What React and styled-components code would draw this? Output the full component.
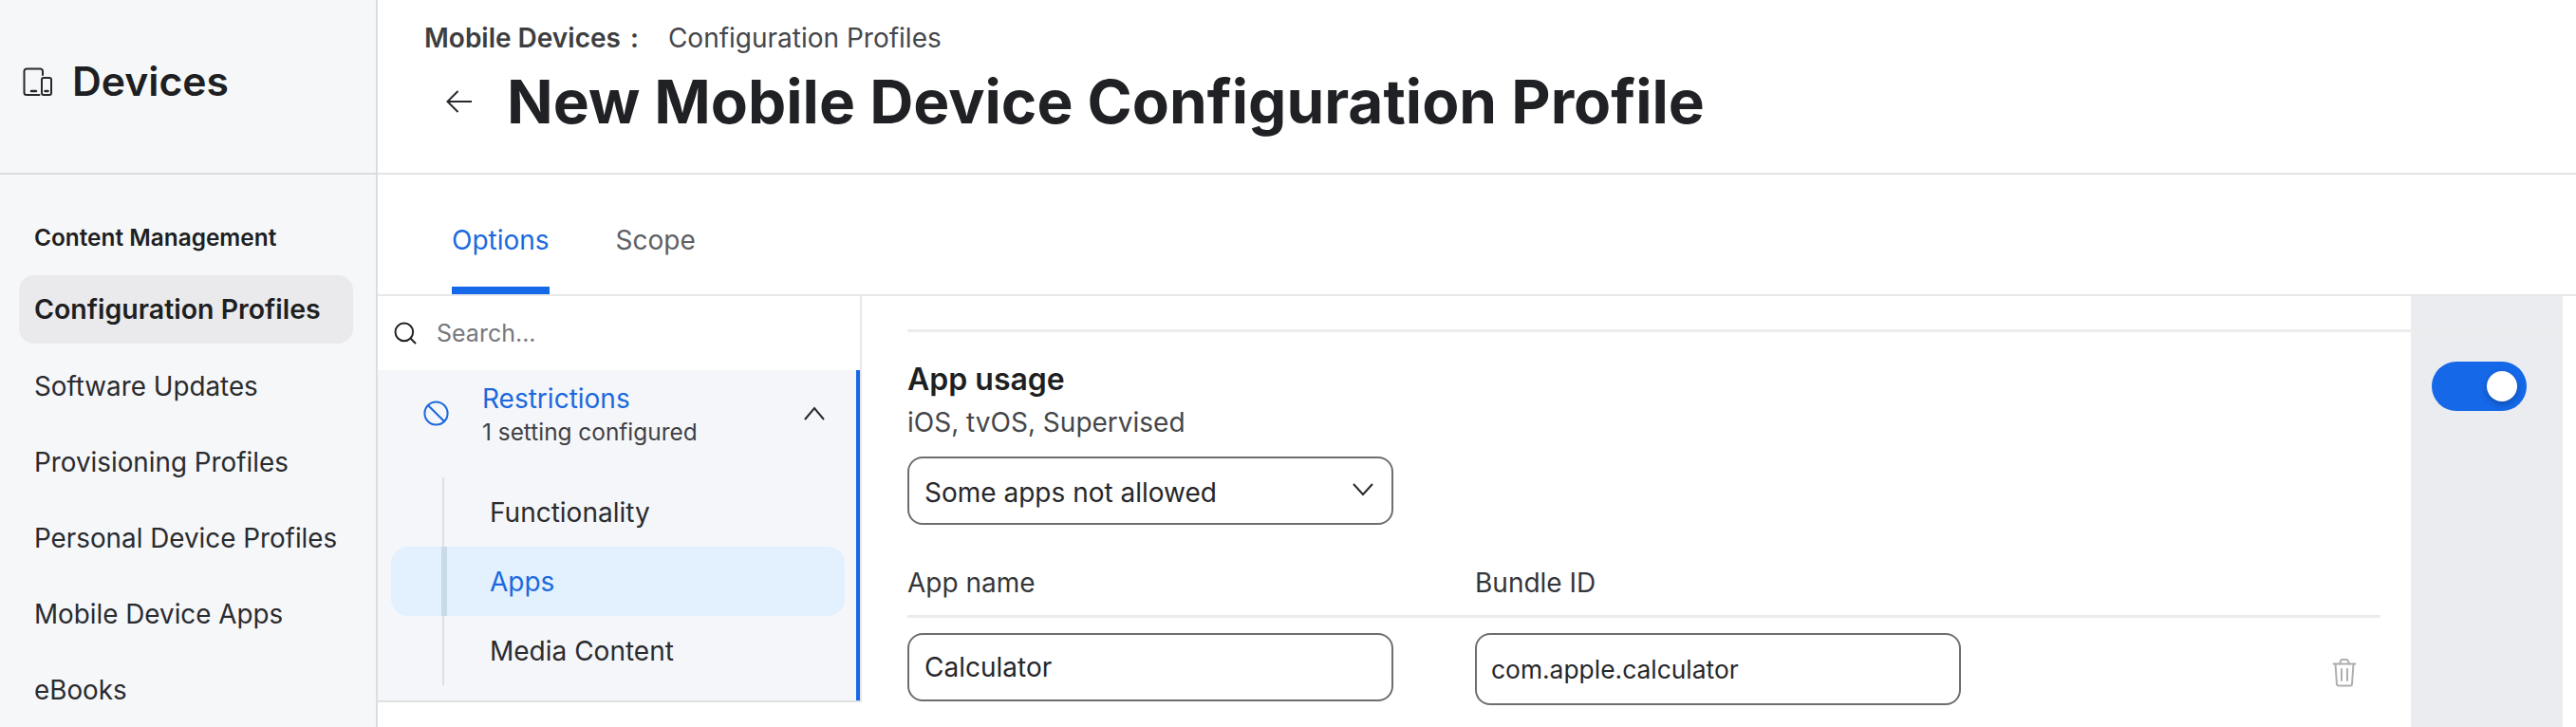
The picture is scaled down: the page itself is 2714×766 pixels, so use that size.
import React from "react";
import styled, { createGlobalStyle } from "styled-components";
import { Ban, Search } from "lucide-react";

const GlobalStyle = createGlobalStyle`
  html, body {
    margin: 0;
    padding: 0;
    background: #fff;
    overflow: hidden;
  }
  * {
    box-sizing: border-box;
  }
  body {
    font-family: Inter, "Liberation Sans", sans-serif;
    color: #212224;
  }
`;

const sideItems = [
  "Software Updates",
  "Provisioning Profiles",
  "Personal Device Profiles",
  "Mobile Device Apps",
  "eBooks",
];

const subItems = [
  { label: "Functionality" },
  { label: "Apps", active: true },
  { label: "Media Content" },
];

export default function App() {
  return (
    <>
      <GlobalStyle />
      <Page>
        <Sidebar>
          <SideHead>
            <DevicesIcon />
            <SideTitle>Devices</SideTitle>
          </SideHead>
          <SideBody>
            <SideSection>Content Management</SideSection>
            <ActiveSideItem>Configuration Profiles</ActiveSideItem>
            {sideItems.map((item) => (
              <SideItem key={item}>{item}</SideItem>
            ))}
          </SideBody>
        </Sidebar>
        <Main>
          <Header>
            <Breadcrumb>
              <Crumb>Mobile Devices</Crumb>
              <CrumbSep>:</CrumbSep>
              <CrumbPage>Configuration Profiles</CrumbPage>
            </Breadcrumb>
            <TitleRow>
              <BackIcon />
              <Title>New Mobile Device Configuration Profile</Title>
            </TitleRow>
          </Header>
          <Tabs>
            <Tab $active>Options</Tab>
            <Tab>Scope</Tab>
          </Tabs>
          <Content>
            <Nav>
              <SearchBar>
                <Search size={28} strokeWidth={1.7} color="#222" />
                <SearchText>Search...</SearchText>
              </SearchBar>
              <NavGroup>
                <GroupHead>
                  <Ban size={29} strokeWidth={1.7} color="#1b69dd" />
                  <GroupText>
                    <GroupName>Restrictions</GroupName>
                    <GroupMeta>1 setting configured</GroupMeta>
                  </GroupText>
                  <ChevronUpIcon />
                </GroupHead>
                <SubList>
                  {subItems.map((item) => (
                    <SubItem key={item.label} $active={item.active}>
                      {item.label}
                    </SubItem>
                  ))}
                </SubList>
              </NavGroup>
            </Nav>
            <Settings>
              <SettingRow $divided $height={38}>
                <SettingBody />
                <ToggleCell />
              </SettingRow>
              <SettingRow>
                <SettingBody>
                  <SettingTitle>App usage</SettingTitle>
                  <SettingMeta>iOS, tvOS, Supervised</SettingMeta>
                  <SelectBox>
                    <SelectValue>Some apps not allowed</SelectValue>
                    <ChevronDownIcon />
                  </SelectBox>
                  <TableHead>
                    <ColName>App name</ColName>
                    <ColName>Bundle ID</ColName>
                  </TableHead>
                  <TableRow>
                    <Field readOnly value="Calculator" />
                    <Field readOnly value="com.apple.calculator" $tall />
                    <TrashButton>
                      <TrashIcon />
                    </TrashButton>
                  </TableRow>
                </SettingBody>
                <ToggleCell>
                  <Toggle>
                    <Knob />
                  </Toggle>
                </ToggleCell>
              </SettingRow>
            </Settings>
          </Content>
        </Main>
      </Page>
    </>
  );
}

const DevicesIcon = () => (
  <svg width="31" height="31" viewBox="0 0 31 31" fill="none" stroke="#26282b" strokeWidth="2" strokeLinecap="round" strokeLinejoin="round">
    <path d="M21 8V4a2.500 2.500 0 0 0-2.500-2.500H4A2.500 2.500 0 0 0 1.500 4v22.500A2.500 2.500 0 0 0 4 29h13.500" />
    <rect x="20" y="11" width="10" height="18" rx="2" />
    <path d="M9 25h5" strokeWidth="2.500" />
    <path d="M23.500 25h3" strokeWidth="2.500" />
  </svg>
);

const BackIcon = () => (
  <svg width="28" height="24" viewBox="0 0 28 24" fill="none" stroke="#26282b" strokeWidth="2">
    <path d="M1.500 12H27" />
    <path d="M12.500 1 1.500 12l11 11" />
  </svg>
);

const ChevronUpIcon = () => (
  <ChevronUpSvg viewBox="0 0 24 15" fill="none" stroke="#26282b" strokeWidth="2">
    <path d="M2 14 12 2l10 12" />
  </ChevronUpSvg>
);

const ChevronDownIcon = () => (
  <ChevronDownSvg viewBox="0 0 24 15" fill="none" stroke="#26282b" strokeWidth="2">
    <path d="M2 2l10 11L22 2" />
  </ChevronDownSvg>
);

const TrashIcon = () => (
  <svg width="26" height="30" viewBox="0 0 26 30" fill="none" stroke="#aeaeae" strokeWidth="2" strokeLinecap="round" strokeLinejoin="round">
    <path d="M1.500 5.500h23" />
    <path d="M8 5.500 9 2.500a2 2 0 0 1 2-1.500h4a2 2 0 0 1 2 1.500l1 3" />
    <path d="M3.500 5.500 5 27a1.800 1.800 0 0 0 1.800 1.500h12.400A1.800 1.800 0 0 0 21 27l1.500-21.500" />
    <path d="M10 11v12" />
    <path d="M16 11v12" />
  </svg>
);

const Page = styled.div`
  display: flex;
  width: 2714px;
  height: 766px;
  overflow: hidden;
  background: #fff;
`;

const Sidebar = styled.aside`
  flex: 0 0 398px;
  display: flex;
  flex-direction: column;
  background: #f6f7f9;
  border-right: 2px solid #dcdde1;
`;

const SideHead = styled.div`
  height: 184px;
  flex: none;
  display: flex;
  align-items: center;
  gap: 21px;
  padding: 0 0 10px 24px;
  border-bottom: 2px solid #dcdde1;
`;

const SideTitle = styled.div`
  font-size: 42.700px;
  font-weight: 600;
  line-height: 48px;
  color: #1e1f22;
`;

const SideBody = styled.nav`
  padding: 50px 24px 0 20px;
`;

const SideSection = styled.div`
  height: 32px;
  padding-left: 16px;
  font-size: 24.400px;
  font-weight: 600;
  line-height: 32px;
  color: #1e1f22;
`;

const SideItem = styled.div`
  height: 80px;
  display: flex;
  align-items: center;
  padding-left: 16px;
  padding-bottom: 1px;
  font-size: 27.800px;
  line-height: 36px;
  color: #2a2b2e;
  white-space: nowrap;
`;

const ActiveSideItem = styled(SideItem)`
  height: 72px;
  margin: 24px 0 5px;
  border-radius: 16px;
  background: #eaeaec;
  font-size: 28.500px;
  font-weight: 600;
  color: #1e1f22;
`;

const Main = styled.main`
  flex: 1;
  min-width: 0;
  display: flex;
  flex-direction: column;
`;

const Header = styled.header`
  height: 184px;
  flex: none;
  padding: 20px 0 0 49px;
  border-bottom: 2px solid #e4e5e8;
`;

const Breadcrumb = styled.div`
  display: flex;
  align-items: center;
  height: 40px;
  font-size: 28px;
  line-height: 40px;
  color: #3d3e40;
`;

const Crumb = styled.span`
  font-weight: 600;
`;

const CrumbSep = styled.span`
  width: 50px;
  padding-left: 10px;
  font-weight: 600;
`;

const CrumbPage = styled.span`
  color: #45464a;
`;

const TitleRow = styled.div`
  display: flex;
  align-items: center;
  gap: 36px;
  height: 84px;
  margin-top: 5px;
  padding-left: 23px;
`;

const Title = styled.h1`
  margin: 0;
  font-size: 63.900px;
  font-weight: 700;
  line-height: 84px;
  color: #202124;
  white-space: nowrap;
`;

const Tabs = styled.div`
  height: 128px;
  flex: none;
  display: flex;
  align-items: flex-end;
  gap: 70px;
  padding-left: 78px;
  border-bottom: 2px solid #e8e9eb;
`;

const Tab = styled.div`
  height: 118px;
  padding-top: 41px;
  font-size: 28px;
  line-height: 40px;
  color: ${({ $active }) => ($active ? "#1b69dd" : "#5e5f62")};
  border-bottom: 8px solid ${({ $active }) => ($active ? "#1568e8" : "transparent")};
`;

const Content = styled.div`
  flex: 1;
  min-height: 0;
  display: flex;
`;

const Nav = styled.div`
  flex: 0 0 510px;
  align-self: flex-start;
  height: 428px;
  display: flex;
  flex-direction: column;
  border-right: 2px solid #e6e7ea;
  border-bottom: 2px solid #dfe0e3;
`;

const SearchBar = styled.div`
  height: 78px;
  flex: none;
  display: flex;
  align-items: center;
  gap: 19px;
  padding-left: 15px;
  background: #fff;
`;

const SearchText = styled.span`
  font-size: 25px;
  color: #77787b;
`;

const NavGroup = styled.div`
  flex: 1;
  background: #f5f6f9;
  border-right: 4px solid #1568e8;
`;

const GroupHead = styled.div`
  height: 113px;
  display: flex;
  align-items: center;
  padding: 0 0 23px 47px;
`;

const GroupText = styled.div`
  margin-left: 34px;
  width: 340px;
  padding-top: 2px;
`;

const GroupName = styled.div`
  font-size: 28px;
  line-height: 38px;
  color: #1b69dd;
`;

const GroupMeta = styled.div`
  font-size: 24.400px;
  line-height: 33px;
  color: #404144;
`;

const ChevronUpSvg = styled.svg`
  width: 24px;
  height: 15px;
  margin: 0 0 0 -2px;
`;

const SubList = styled.div`
  position: relative;
  margin: 0 12px 0 14px;
  padding: 0;
  &::before {
    content: "";
    position: absolute;
    left: 54px;
    top: 0;
    bottom: 0;
    width: 2px;
    background: #dfe0e4;
  }
`;

const SubItem = styled.div`
  position: relative;
  height: 73px;
  display: flex;
  align-items: center;
  padding-left: 104px;
  font-size: 28px;
  line-height: 38px;
  border-radius: 18px;
  color: ${({ $active }) => ($active ? "#1b69dd" : "#2a2b2e")};
  background: ${({ $active }) => ($active ? "#e2f1fd" : "transparent")};
  &::before {
    content: "";
    display: ${({ $active }) => ($active ? "block" : "none")};
    position: absolute;
    left: 53px;
    top: 0;
    bottom: 0;
    width: 6px;
    background: #c9dbe9;
  }
`;

const Settings = styled.div`
  flex: 1;
  min-width: 0;
  display: flex;
  flex-direction: column;
  padding: 0 14px 0 48px;
`;

const SettingRow = styled.div`
  flex: ${({ $height }) => ($height ? `0 0 ${$height}px` : "1")};
  display: grid;
  grid-template-columns: 1fr 160px;
  border-bottom: ${({ $divided }) => ($divided ? "3px solid rgba(40, 44, 60, 0.09)" : "none")};
`;

const SettingBody = styled.div`
  min-width: 0;
  padding: 30px 32px 0 0;
`;

const ToggleCell = styled.div`
  background: #ebecf0;
  padding: 31px 0 0 22px;
`;

const Toggle = styled.div`
  width: 100px;
  height: 52px;
  display: flex;
  align-items: center;
  justify-content: flex-end;
  padding-right: 10px;
  border-radius: 26px;
  background: #1568e8;
`;

const Knob = styled.div`
  width: 32px;
  height: 32px;
  border-radius: 50%;
  background: #fff;
  box-shadow: 0 3px 6px rgba(0, 0, 0, 0.25);
`;

const SettingTitle = styled.div`
  font-size: 32px;
  font-weight: 600;
  line-height: 40px;
  color: #1e1f22;
`;

const SettingMeta = styled.div`
  margin-top: 6px;
  font-size: 28px;
  line-height: 38px;
  color: #45464a;
`;

const SelectBox = styled.div`
  width: 512px;
  height: 72px;
  margin-top: 17px;
  display: flex;
  align-items: center;
  justify-content: space-between;
  padding: 0 18px 0 16px;
  border: 2px solid #6e6e70;
  border-radius: 16px;
  font-size: 28px;
  color: #26272a;
`;

const SelectValue = styled.span`
  padding-top: 3px;
`;

const ChevronDownSvg = styled.svg`
  width: 24px;
  height: 15px;
  margin-top: -4px;
`;

const TableHead = styled.div`
  height: 98px;
  padding-top: 42px;
  display: grid;
  grid-template-columns: 598px 1fr;
  border-bottom: 3px solid #eaebed;
`;

const ColName = styled.div`
  font-size: 28px;
  line-height: 38px;
  color: #35363a;
`;

const TableRow = styled.div`
  display: flex;
  align-items: flex-start;
  gap: 86px;
  padding-top: 16px;
`;

const Field = styled.input`
  width: 512px;
  height: ${({ $tall }) => ($tall ? "76px" : "72px")};
  padding: 0 ${({ $tall }) => ($tall ? "15px" : "16px")};
  border: 2px solid #6e6e70;
  border-radius: 16px;
  background: #fff;
  font-family: inherit;
  font-size: ${({ $tall }) => ($tall ? "26.400px" : "28px")};
  color: #26272a;
  outline: none;
`;

const TrashButton = styled.div`
  margin: 27px 0 0 auto;
  padding-right: 25px;
  line-height: 0;
`;
